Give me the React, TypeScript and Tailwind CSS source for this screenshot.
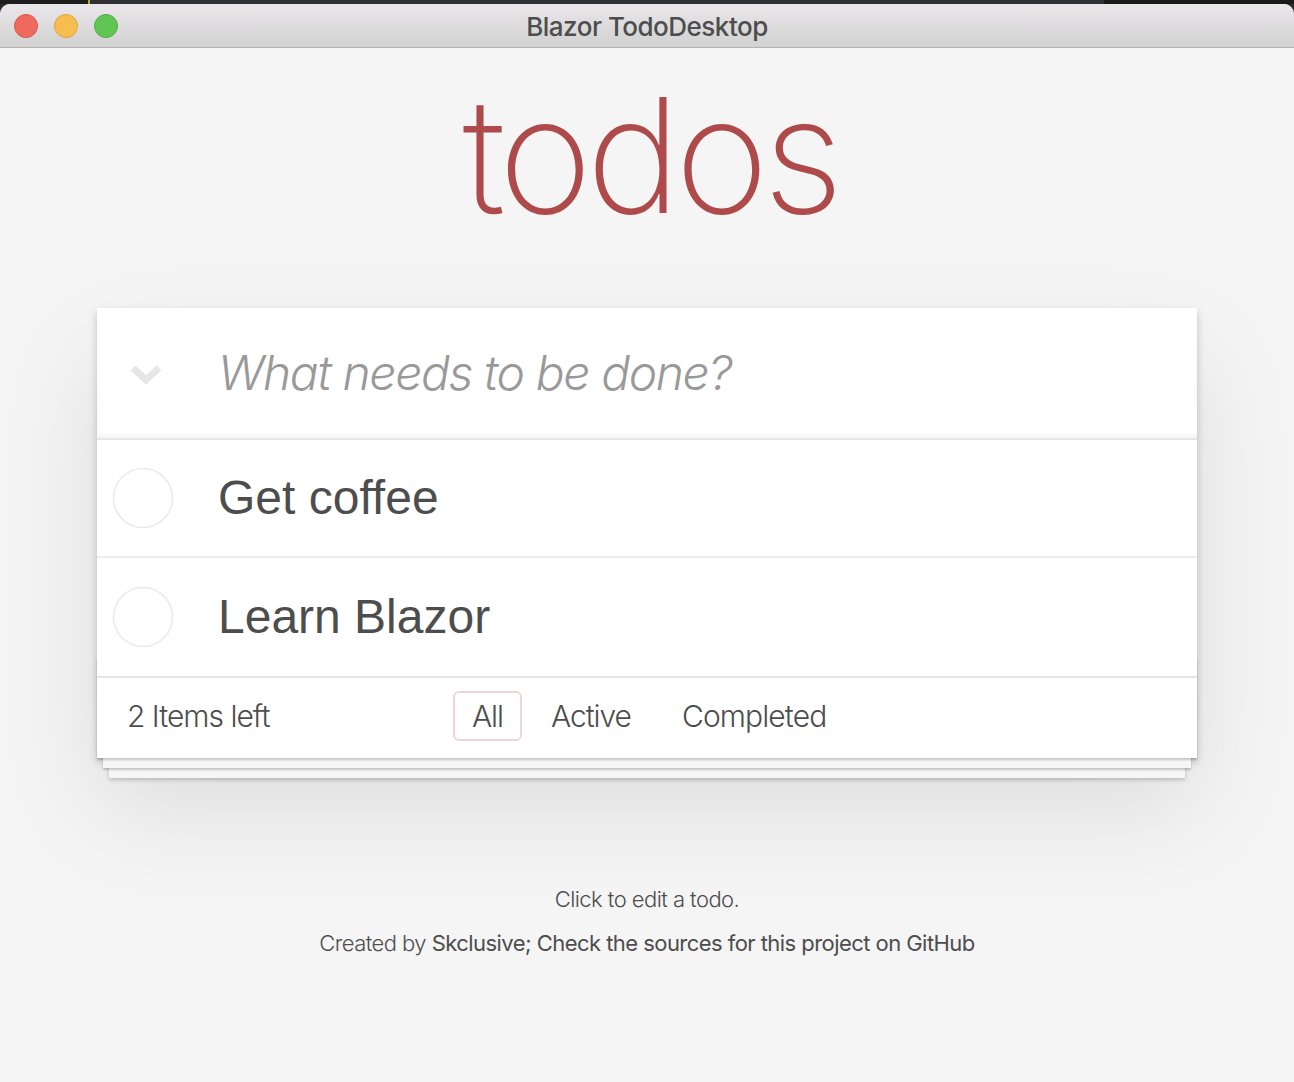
import React from "react";

const LIGHT = { fontFamily: "Inter, 'Liberation Sans', sans-serif" };
const REG = { fontFamily: "'Liberation Sans', Arial, sans-serif" };

function Chevron() {
  return (
    <svg width="32" height="22" viewBox="0 0 32 22" className="block">
      <polyline points="3,4 16,16 29,4" fill="none" stroke="#e6e6e6" strokeWidth="7" strokeLinejoin="miter" />
    </svg>
  );
}

function Circle() {
  return (
    <svg width="62" height="62" viewBox="0 0 62 62" className="block">
      <circle cx="31" cy="31" r="29.5" fill="none" stroke="#ebebeb" strokeWidth="1.6" />
    </svg>
  );
}

function TodoRow({ text, last }: { text: string; last?: boolean }) {
  return (
    <div className={`flex h-[118px] items-center ${last ? "" : "border-b-2 border-[#ededed]"}`}>
      <div className="ml-[15px] w-[106px]">
        <Circle />
      </div>
      <span className="text-[48px] leading-[58px] text-[#4d4d4d]" style={REG}>
        {text}
      </span>
    </div>
  );
}

export default function App() {
  return (
    <div className="flex h-[1082px] w-[1294px] flex-col overflow-hidden bg-[#2b2b2b]">
      <div className="flex h-[4px] shrink-0">
        <div className="w-[88px] bg-[#1e1e1e]" />
        <div className="w-[2px] bg-[#b8a23a]" />
        <div className="flex-1 bg-[#2f3033]" />
        <div className="w-[190px] bg-[#1a1a1a]" />
      </div>
      <div className="flex flex-1 flex-col overflow-hidden rounded-t-[10px] bg-[#f5f5f5]">
        <div className="relative flex h-[44px] shrink-0 items-center justify-center border-b border-[#b1b1b1] bg-gradient-to-b from-[#e9e7e9] to-[#d2d1d2]">
          <div className="absolute left-[14px] top-[10px] flex gap-[16px]">
            <div className="h-[24px] w-[24px] rounded-full border border-[#de5149] bg-[#ee6a5f]" />
            <div className="h-[24px] w-[24px] rounded-full border border-[#dfa33a] bg-[#f6be4f]" />
            <div className="h-[24px] w-[24px] rounded-full border border-[#4fae45] bg-[#61c554]" />
          </div>
          <span className="mt-[2px] text-[26px] leading-[30px] tracking-[-0.5px] text-[#4d4d4d]" style={{ fontFamily: "Inter, 'Liberation Sans', sans-serif", fontWeight: 450 }}>
            Blazor TodoDesktop
          </span>
        </div>

        <div className="flex flex-1 flex-col items-center">
          <h1
            className="mt-[27px] h-[160px] pl-[6px] text-center text-[160px] leading-[160px] tracking-[-6px] text-[#af4a4b]"
            style={{ fontFamily: "Inter, 'Liberation Sans', sans-serif", fontWeight: 200 }}
          >
            todos
          </h1>

          <div className="mt-[73px] w-[1100px] bg-white shadow-[0_4px_8px_0_rgba(0,0,0,0.2),0_50px_100px_0_rgba(0,0,0,0.1)]">
            <div className="flex h-[130px] items-center shadow-[inset_0_-4px_2px_rgba(0,0,0,0.03)]">
              <div className="ml-[33px] mt-[4px] w-[88px]">
                <Chevron />
              </div>
              <span className="text-[48px] font-light italic leading-[58px] tracking-[-1.4px] text-[#999999]" style={LIGHT}>
                What needs to be done?
              </span>
            </div>
            <div className="border-t-2 border-[#e6e6e6]">
              <TodoRow text="Get coffee" />
              <TodoRow text="Learn Blazor" last />
            </div>
            <div className="relative flex h-[82px] items-center border-t-2 border-[#e6e6e6] text-[30px] font-light text-[#4d4d4d]" style={LIGHT}>
              <div className="pointer-events-none absolute inset-x-0 bottom-0 h-[100px] shadow-[0_2px_2px_rgba(0,0,0,0.2),0_16px_0_-6px_#f6f6f6,0_18px_2px_-6px_rgba(0,0,0,0.2),0_32px_0_-12px_#f6f6f6,0_34px_4px_-12px_rgba(0,0,0,0.2)]" />
              <div className="relative flex h-full w-full items-center bg-white pb-[4px]">
                <span className="ml-[30px] w-[326px] tracking-[-1px]">2 Items left</span>
                <span className="flex h-[50px] w-[69px] items-center justify-center rounded-[6px] border-2 border-[#efd5d5] tracking-[-1px]">All</span>
                <span className="ml-[29px] w-[131px] tracking-[-1.1px]">Active</span>
                <span className="tracking-[-0.9px]">Completed</span>
              </div>
            </div>
          </div>

          <div className="mt-[130px] flex flex-col items-center gap-[22px] text-[22px] leading-[22px] tracking-[-0.55px] text-[#4d4d4d]" style={LIGHT}>
            <p className="font-light">Click to edit a todo.</p>
            <p className="font-light">
              Created by <span className="font-normal">Skclusive; Check the sources for this project on GitHub</span>
            </p>
          </div>
        </div>
      </div>
    </div>
  );
}
